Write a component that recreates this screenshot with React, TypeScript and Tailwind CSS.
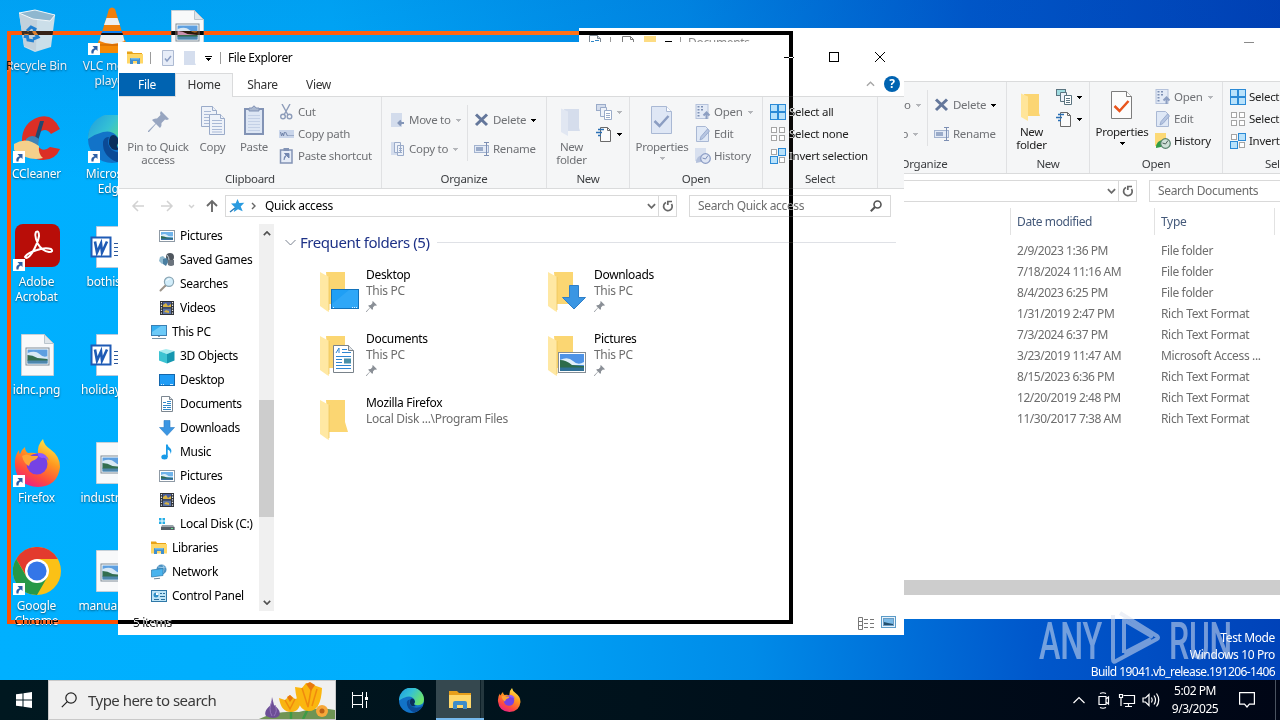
import type { ReactNode } from "react";

type IconProps = { className?: string };

/* ---------- small shared glyphs ---------- */

function Caret({ className = "text-black" }: IconProps) {
  return (
    <svg viewBox="0 0 5 3" className={`w-[5px] h-[3px] shrink-0 ${className}`} shapeRendering="crispEdges">
      <path d="M0 0h5v1H4v1H3v1H2V2H1V1H0z" fill="currentColor" />
    </svg>
  );
}

function PinIcon({ className = "" }: IconProps) {
  return (
    <svg viewBox="0 0 21 21" className={className} fill="currentColor">
      <path d="M13 0l8 8-2 1-2-.5-3.500 3.500q.5 3-1.500 5L8 13 1 21H0v-1L7.500 12.500 4 9q2-2 5-1.500L12.500 4 12 2z" />
    </svg>
  );
}

function ExplorerIcon({ className = "w-4 h-4" }: IconProps) {
  return (
    <svg viewBox="0 0 16 16" className={className}>
      <path d="M0 1.500h5l1 1.500h9v4H0z" fill="#e8a317" />
      <path d="M0 4h16v9.500H0z" fill="#ffd766" />
      <path d="M3 14V9q0-1 1-1h8q1 0 1 1v5h-3v-3H6v3z" fill="#3f8fcf" />
      <path d="M4 8h8v1.500H4z" fill="#74b8e8" />
    </svg>
  );
}

function PictureIcon({ className = "w-4 h-4" }: IconProps) {
  return (
    <svg viewBox="0 0 16 16" className={className}>
      <rect x=".5" y="2.500" width="15" height="11" fill="#fff" stroke="#8f9aa5" />
      <rect x="2" y="4" width="12" height="8" fill="#6fb3ea" />
      <path d="M2 7q4-2 6 0t6 1v1H2z" fill="#dcecf8" />
      <path d="M2 8q3 0 6 1.500l6 .5v1H2z" fill="#2d6b52" />
      <path d="M2 10.500h12V12H2z" fill="#3a72a8" />
    </svg>
  );
}

function GamesIcon() {
  return (
    <svg viewBox="0 0 16 16" className="w-4 h-4">
      <circle cx="11" cy="5" r="4" fill="#4f565e" />
      <path d="M8 8h7v5q-3 2-6 0z" fill="#6b747d" />
      <path d="M1 5l3-1 3 3-1 4-3 1-3-3z" fill="#8fb9cf" />
      <path d="M4 7l4-1 1 4-2 4-3-2z" fill="#4a7ea0" />
      <path d="M8 3q2 2 2 5" stroke="#c6d4de" fill="none" />
    </svg>
  );
}

function SearchesIcon() {
  return (
    <svg viewBox="0 0 16 16" className="w-4 h-4">
      <path d="M1.500 14.500l5-5" stroke="#9b9389" strokeWidth="2" strokeLinecap="round" />
      <circle cx="10" cy="5.800" r="4.600" fill="#d2edfa" stroke="#8aa6b5" strokeWidth="1.200" />
      <path d="M7.500 5q1-2 3-2" stroke="#fff" fill="none" />
    </svg>
  );
}

function VideosIcon() {
  return (
    <svg viewBox="0 0 16 16" className="w-4 h-4">
      <rect x="1" y="1" width="14" height="14" fill="#2e3238" />
      <path d="M2.500 2v13M13.500 2v13" stroke="#e4e6e8" strokeWidth="1.200" strokeDasharray="1.300 1.300" />
      <rect x="4" y="2" width="8" height="5.500" fill="#4b5f9c" />
      <rect x="4" y="8.500" width="8" height="5.500" fill="#5c75a8" />
      <path d="M4 5l3-2 2 3 3-2v3H4zM5 12l2-2 3 1v2z" fill="#d8b343" />
    </svg>
  );
}

function PcIcon() {
  return (
    <svg viewBox="0 0 16 16" className="w-4 h-4">
      <rect x=".5" y="1.500" width="15" height="10" fill="#35b0f2" stroke="#3a80b4" />
      <path d="M1 8l9-6h5v9H1z" fill="#6ccaf8" />
      <path d="M7 12h2v1H7z" fill="#8a98a4" />
      <path d="M1 14.500h14" stroke="#7493a8" />
    </svg>
  );
}

function CubeIcon() {
  return (
    <svg viewBox="0 0 16 16" className="w-4 h-4">
      <path d="M0 3l7-2 8.500 2L8 6z" fill="#a8ecf0" />
      <path d="M0 3l8 3v9.500l-8-3z" fill="#3cc3d2" />
      <path d="M8 6l7.500-3v9.500l-7.500 3z" fill="#1597b0" />
    </svg>
  );
}

function DesktopIcon() {
  return (
    <svg viewBox="0 0 16 16" className="w-4 h-4">
      <rect x=".5" y="2.500" width="15" height="11" fill="#1f9cf5" stroke="#1467ac" />
      <path d="M2 12.500h1M4 12.500h1M11 12.500h3" stroke="#cfe9fd" />
    </svg>
  );
}

function DocumentIcon() {
  return (
    <svg viewBox="0 0 16 16" className="w-4 h-4">
      <path d="M2.500.5h8l3 3v12h-11z" fill="#fff" stroke="#7c8791" />
      <path d="M10.500.5v3h3" fill="#d9dee3" stroke="#7c8791" />
      <path d="M4 6.500h3M8 5.500h4M8 7.500h4M4 9.500h8M4 11.500h3M4 13.500h8M8 11.500h4" stroke="#2f87c8" />
    </svg>
  );
}

function DownloadIcon({ className = "w-4 h-4" }: IconProps) {
  return (
    <svg viewBox="0 0 16 16" className={className}>
      <path d="M5 .5h6v7h4.500L8 15.500.5 7.500H5z" fill="#3b96e3" stroke="#2b7cc4" strokeWidth=".6" />
    </svg>
  );
}

function MusicIcon() {
  return (
    <svg viewBox="0 0 16 16" className="w-4 h-4">
      <ellipse cx="5.500" cy="13" rx="3.200" ry="2.500" fill="#1a9be8" />
      <path d="M7 13V.5h1.700q.2 2 2.300 3.500 2.500 2.500.5 6 .3-3.500-2.800-4.500V13z" fill="#1a9be8" />
    </svg>
  );
}

function DiskIcon() {
  return (
    <svg viewBox="0 0 16 16" className="w-4 h-4">
      <path d="M0 2h2.500v2.500H0zM3.500 2H6v2.500H3.500zM0 5.500h2.500V8H0zM3.500 5.500H6V8H3.500z" fill="#25aee6" />
      <path d="M3 9h11l1.500 2v3H2v-3z" fill="#9aa3aa" />
      <path d="M2 11h13.500v3H2z" fill="#565f67" />
      <path d="M12 12.500h2" stroke="#67e08c" />
    </svg>
  );
}

function NetworkIcon() {
  return (
    <svg viewBox="0 0 16 16" className="w-4 h-4">
      <circle cx="10.500" cy="5.500" r="5" fill="#4b91c2" />
      <path d="M7 3q4 1 8 0M12 1q2 4 0 8" stroke="#9dcbe8" fill="none" />
      <path d="M.5 6L12 4.500v7L.5 13z" fill="#49b4ee" stroke="#2c7aac" strokeWidth=".7" />
      <path d="M3 14.800l6-.5" stroke="#6f8798" />
    </svg>
  );
}

function ControlPanelIcon() {
  return (
    <svg viewBox="0 0 16 16" className="w-4 h-4">
      <rect x=".5" y="2.500" width="15" height="11" fill="#bfe5f7" stroke="#2f78a8" />
      <circle cx="5" cy="7" r="2.500" fill="#2f8fc6" />
      <path d="M5 7V4.500A2.500 2.500 0 017.500 7z" fill="#fff" />
      <path d="M9 5.500h2M12 5.500h2M9 8.500h5M3 11.500h5M10 11.500h4" stroke="#2a6f9c" />
    </svg>
  );
}

/* ---------- ribbon glyphs ---------- */

function PagesIcon() {
  return (
    <svg viewBox="0 0 32 32" className="w-8 h-8">
      <g fill="#eef2f9" stroke="#9aabc9">
        <path d="M4.500 1.500h11l4 4v16h-15z" />
        <path d="M15.500 1.500v4h4" />
        <path d="M12.500 9.500h11l4 4v16h-15z" />
        <path d="M23.500 9.500v4h4" />
      </g>
      <path
        d="M7 6.500h7M7 9.500h5M7 12.500h5M7 15.500h5M7 18.500h5M15 15.500h10M15 18.500h10M15 21.500h10M15 24.500h10M15 27h10"
        stroke="#a9b9d6"
      />
    </svg>
  );
}

function PasteIcon() {
  return (
    <svg viewBox="0 0 32 32" className="w-8 h-8">
      <rect x="7" y="4" width="18" height="25" fill="#dde6f4" stroke="#8293b5" strokeWidth="2" />
      <path d="M11 6V3h3q2-4 4 0h3v3z" fill="#aab8d0" stroke="#8293b5" />
      <path d="M10 10.500h12M10 13.500h12M10 16.500h12M10 19.500h12M10 22.500h12M10 25.500h12" stroke="#c3d0e6" />
    </svg>
  );
}

function ScissorsIcon() {
  return (
    <svg viewBox="0 0 16 16" className="w-4 h-4" fill="none" stroke="#8d9cb9" strokeWidth="1.400">
      <path d="M3 0l6 11M11 0L5 11" />
      <circle cx="4" cy="12.500" r="2.300" />
      <circle cx="10.500" cy="12.500" r="2.300" />
    </svg>
  );
}

function CopyPathIcon() {
  return (
    <svg viewBox="0 0 16 16" className="w-4 h-4">
      <rect x="0" y="4" width="15" height="8" fill="#c9d5ea" />
      <path d="M1.500 6l1 4 1-3 1 3 1-4M6.500 6l2 4M9.500 9.500h1M11.500 9.500h1M13.500 9.500h1" stroke="#6f82a8" fill="none" />
    </svg>
  );
}

function PasteShortcutIcon() {
  return (
    <svg viewBox="0 0 16 16" className="w-4 h-4">
      <rect x="1.500" y="2" width="11.500" height="13" fill="#e6ecf7" stroke="#8293b5" strokeWidth="1.500" />
      <path d="M4.500 0h5.500v3H4.500z" fill="#8293b5" />
      <path d="M5 12q-.5-4 3-5M5.500 5.500H10V10z" stroke="#7387b0" fill="#7387b0" />
    </svg>
  );
}

function MoveToIcon() {
  return (
    <svg viewBox="0 0 16 16" className="w-4 h-4">
      <path d="M1 1h11v14H1z" fill="#d3dcec" />
      <path d="M14 11H9M11 8.500L8.500 11l2.500 2.500" stroke="#8496b8" strokeWidth="2" fill="none" />
    </svg>
  );
}

function CopyToIcon() {
  return (
    <svg viewBox="0 0 16 16" className="w-4 h-4">
      <path d="M1 1h6v13H1z" fill="#d3dcec" />
      <path d="M4.500 1.500h6v10h-6zM7.500 4.500h6v10h-6z" fill="#eef2f9" stroke="#9aabc9" />
      <path d="M9 7.500h3M9 9.500h3M9 11.500h3" stroke="#9aabc9" />
    </svg>
  );
}

function DeleteIcon() {
  return (
    <svg viewBox="0 0 16 16" className="w-4 h-4" fill="none" stroke="#64779b" strokeWidth="3">
      <path d="M2 2.500l11 10.500M13 2.500L2 13" />
    </svg>
  );
}

function RenameIcon() {
  return (
    <svg viewBox="0 0 16 16" className="w-4 h-4">
      <rect x=".5" y="4.500" width="14" height="7" fill="#e3eaf6" stroke="#a3b3cf" />
      <rect x="2" y="6" width="7" height="4" fill="#9aabc9" />
      <path d="M10 1.500h5M12.500 1.500v13M10 14.500h5" stroke="#7d8fb3" />
    </svg>
  );
}

function NewFolderIcon({ active }: { active: boolean }) {
  return (
    <svg viewBox="0 0 32 32" className="w-8 h-8">
      <path d="M8 4h15v19l1 3H11z" fill={active ? "#fbd573" : "#d5ddec"} />
      <path d="M5 3.500l7 3V31l-7-4z" fill={active ? "#ffe59a" : "#e1e7f2"} />
    </svg>
  );
}

function NewItemIcon({ active }: { active: boolean }) {
  return (
    <svg viewBox="0 0 16 16" className="w-4 h-4" stroke={active ? "#5b7480" : "#9aabc9"}>
      <rect x=".5" y=".5" width="9" height="6" fill={active ? "#9fdbe0" : "#d3dcec"} />
      <path d="M4.500 3.500h6v9h-6z" fill="#eef2f9" />
      <path d="M8.500 6.500h7v9h-7z" fill="#fff" />
      <path d="M10 9.500h4M10 11.500h4M10 13.500h4" />
    </svg>
  );
}

function EasyAccessIcon() {
  return (
    <svg viewBox="0 0 16 16" className="w-4 h-4">
      <path d="M4.500 1.500h7l3 3v11h-10z" fill="#fbfbfb" stroke="#6a6a6a" />
      <path d="M11.500 1.500v3h3" fill="none" stroke="#6a6a6a" />
      <path d="M2 3.500h6M0 6.500h6M2 9.500h3" stroke="#2a6fb5" strokeWidth="1.300" />
    </svg>
  );
}

function PropertiesIcon({ active }: { active: boolean }) {
  return (
    <svg viewBox="0 0 32 32" className="w-8 h-8">
      <path
        d="M5.500 1.500h15l5 5v22h-20z"
        fill={active ? "#fcfcfc" : "#dfe7f5"}
        stroke={active ? "#7d7d7d" : "#a9b8d4"}
      />
      <path d="M20.500 1.500v5h5" fill="#fff" stroke={active ? "#7d7d7d" : "#a9b8d4"} />
      <path d="M8.500 16l5 5 9-10" fill="none" stroke={active ? "#e8541c" : "#8b9dc2"} strokeWidth="2.500" />
    </svg>
  );
}

function OpenIcon() {
  return (
    <svg viewBox="0 0 16 16" className="w-4 h-4">
      <rect x="1" y=".5" width="12" height="14" fill="#e3eaf6" stroke="#b5c2db" />
      <path d="M3.500 2v12M7 2v5" stroke="#7d8fb3" strokeWidth="2" strokeDasharray="1.500 1.500" />
      <path d="M11.500 15V9M8.500 11.500l3-3 3 3" stroke="#8d9fc2" strokeWidth="2" fill="none" />
    </svg>
  );
}

function EditIcon() {
  return (
    <svg viewBox="0 0 16 16" className="w-4 h-4">
      <path d="M1.500.5h9l3 3v12h-12z" fill="#dfe8f6" stroke="#a9b8d4" />
      <path d="M5 14l1-3.500L12.500 3l2 2-6.500 7.500z" fill="#b7c6e2" stroke="#8fa2c8" strokeWidth=".8" />
    </svg>
  );
}

function HistoryIcon({ active }: { active: boolean }) {
  return (
    <svg viewBox="0 0 16 16" className="w-4 h-4">
      <path d="M0 0h11v13H0z" fill={active ? "#fcd976" : "#d8e0ef"} />
      <path d="M1 15q0-8 8-8l-3 7z" fill={active ? "#2f9c46" : "#b4c1dc"} />
      <circle cx="10.500" cy="10.500" r="4.800" fill={active ? "#cfe0d8" : "#dfe6f4"} stroke={active ? "#57826c" : "#8b9cc4"} strokeWidth="1.200" />
      <path d="M7.500 10l3 1 2.500-3.500" fill="none" stroke={active ? "#4a5f57" : "#7b8db8"} />
    </svg>
  );
}

function SelectIcon({ filled }: { filled: boolean[] }) {
  return (
    <svg viewBox="0 0 16 16" className="w-4 h-4">
      {filled.map((on, i) => {
        const x = (i % 2) * 8;
        const y = i > 1 ? 8 : 0;
        return on ? (
          <rect key={i} x={x + 0.5} y={y + 0.5} width="7" height="7" fill="#b9e2fb" stroke="#2b8ad6" />
        ) : (
          <rect key={i} x={x + 1.5} y={y + 1.5} width="5" height="5" fill="#fff" stroke="#a5a5a5" />
        );
      })}
    </svg>
  );
}

/* ---------- ribbon ---------- */

function SmallButton({
  icon,
  children,
  enabled = false,
  caret,
}: {
  icon: ReactNode;
  children?: ReactNode;
  enabled?: boolean;
  caret?: "on" | "off";
}) {
  return (
    <div className={`flex items-center h-[22px] gap-[3px] whitespace-nowrap ${enabled ? "text-[#222]" : "text-[#6f7175]"}`}>
      {icon}
      {children && <span>{children}</span>}
      {caret && <Caret className={caret === "on" ? "text-black ml-0.5" : "text-[#b4b6ba] ml-0.5"} />}
    </div>
  );
}

function LargeButton({
  icon,
  lines,
  width,
  enabled = false,
}: {
  icon: ReactNode;
  lines: string[];
  width: string;
  enabled?: boolean;
}) {
  return (
    <div className={`flex flex-col items-center pt-1 shrink-0 ${width} ${enabled ? "text-[#222]" : "text-[#6f7175]"}`}>
      <div className="flex items-center justify-center w-8 h-8">{icon}</div>
      <div className="mt-[3px] text-center leading-[13px] whitespace-nowrap">
        {lines.map((l) => (
          <div key={l}>{l}</div>
        ))}
      </div>
    </div>
  );
}

function Group({ label, width, children }: { label: string; width: string; children: ReactNode }) {
  return (
    <div className={`flex flex-col shrink-0 border-r border-[#e0e1e3] pt-1 ${width}`}>
      <div className="flex h-[66px]">{children}</div>
      <div className="h-5 text-center leading-[24px] text-[#3c3e41]">{label}</div>
    </div>
  );
}

function Ribbon({ active = false }: { active?: boolean }) {
  return (
    <div className="flex h-[93px] shrink-0 bg-[#f5f6f7] border-t border-b border-[#dadbdc] overflow-hidden text-[11.5px] tracking-[-0.28px]">
      <Group label="Clipboard" width="w-[263px]">
        <LargeButton icon={<PinIcon className="w-[21px] h-[21px] text-[#97a5c0]" />} lines={["Pin to Quick", "access"]} width="w-[78px]" />
        <LargeButton icon={<PagesIcon />} lines={["Copy"]} width="w-[31px]" />
        <LargeButton icon={<PasteIcon />} lines={["Paste"]} width="w-[52px]" />
        <div className="flex flex-col -ml-px">
          <SmallButton icon={<ScissorsIcon />}>Cut</SmallButton>
          <SmallButton icon={<CopyPathIcon />}>Copy path</SmallButton>
          <SmallButton icon={<PasteShortcutIcon />}>Paste shortcut</SmallButton>
        </div>
      </Group>
      <Group label="Organize" width="w-[165px]">
        <div className="flex flex-col gap-[7px] w-[86px] h-14 mt-1 pl-2 pt-1 border-r border-[#e0e1e3]">
          <SmallButton icon={<MoveToIcon />} caret="off">Move to</SmallButton>
          <SmallButton icon={<CopyToIcon />} caret="off">Copy to</SmallButton>
        </div>
        <div className="flex flex-col gap-[7px] pl-[6px] pt-2">
          <SmallButton icon={<DeleteIcon />} caret="on">Delete</SmallButton>
          <SmallButton icon={<RenameIcon />}>Rename</SmallButton>
        </div>
      </Group>
      <Group label="New" width="w-[83px]">
        <LargeButton icon={<NewFolderIcon active={active} />} lines={["New", "folder"]} width="w-[49px]" enabled={active} />
        <div className="flex flex-col">
          <SmallButton icon={<NewItemIcon active={active} />} caret={active ? "on" : "off"} />
          <SmallButton icon={<EasyAccessIcon />} caret="on" />
        </div>
      </Group>
      <Group label="Open" width="w-[133px]">
        <div className="flex flex-col items-center">
          <LargeButton icon={<PropertiesIcon active={active} />} lines={["Properties"]} width="w-[64px]" enabled={active} />
          <Caret className={active ? "mt-1 text-black" : "mt-1 text-[#b4b6ba]"} />
        </div>
        <div className="flex flex-col pl-px">
          <SmallButton icon={<OpenIcon />} caret="off">Open</SmallButton>
          <SmallButton icon={<EditIcon />}>Edit</SmallButton>
          <SmallButton icon={<HistoryIcon active={active} />} enabled={active}>History</SmallButton>
        </div>
      </Group>
      <Group label="Select" width="w-[115px]">
        <div className="flex flex-col pl-[7px]">
          <SmallButton icon={<SelectIcon filled={[true, true, true, true]} />} enabled>Select all</SmallButton>
          <SmallButton icon={<SelectIcon filled={[false, false, false, false]} />} enabled>Select none</SmallButton>
          <SmallButton icon={<SelectIcon filled={[false, true, true, false]} />} enabled>Invert selection</SmallButton>
        </div>
      </Group>
    </div>
  );
}

function AddressBar({ search, children }: { search: string; children?: ReactNode }) {
  return (
    <div className="flex items-center shrink-0 h-[22px] mt-1.5">
      <div className="flex items-center w-[106px] shrink-0 pl-3">
        <svg viewBox="0 0 94 16" className="w-[94px] h-4" fill="none" strokeWidth="1.500">
          <path d="M13 8H2M7 3L2 8l5 5M30 8h11M36 3l5 5-5 5" stroke="#d2d2d2" />
          <path d="M58 7l2.500 2.500L63 7" stroke="#d2d2d2" />
          <path d="M81 14V3M76 8l5-5 5 5" stroke="#6a6a6a" strokeWidth="1.900" />
        </svg>
      </div>
      <div className="flex items-center h-[22px] w-[452px] shrink-0 border border-[#d9d9d9]">
        {children}
        <div className="flex-1" />
        <svg viewBox="0 0 10 6" className="w-[9px] h-[6px] mr-[2px]" fill="none" stroke="#6a6a6a" strokeWidth="2">
          <path d="M1 1l4 4 4-4" />
        </svg>
        <div className="flex items-center justify-center w-[18px] h-full border-l border-[#d9d9d9]">
          <svg viewBox="0 0 12 12" className="w-3 h-3" fill="none" stroke="#666" strokeWidth="1.700">
            <path d="M4 2.500a4.300 4.300 0 105.500 1.500" />
            <path d="M5.800 5V1.500H10" />
          </svg>
        </div>
      </div>
      <div className="flex items-center justify-between h-[22px] w-[202px] shrink-0 ml-3 pl-2 pr-2 border border-[#d9d9d9] text-[#6d6d6d] tracking-[-0.35px]">
        <span>{search}</span>
        <svg viewBox="0 0 12 12" className="w-3 h-3" fill="none" stroke="#555">
          <circle cx="7.500" cy="4.500" r="3.500" strokeWidth="1.600" />
          <path d="M5 7L.8 11.200" strokeWidth="2" />
        </svg>
      </div>
    </div>
  );
}

/* ---------- quick access window ---------- */

const navItems: { name: string; icon: ReactNode; top?: boolean }[] = [
  { name: "Pictures", icon: <PictureIcon /> },
  { name: "Saved Games", icon: <GamesIcon /> },
  { name: "Searches", icon: <SearchesIcon /> },
  { name: "Videos", icon: <VideosIcon /> },
  { name: "This PC", icon: <PcIcon />, top: true },
  { name: "3D Objects", icon: <CubeIcon /> },
  { name: "Desktop", icon: <DesktopIcon /> },
  { name: "Documents", icon: <DocumentIcon /> },
  { name: "Downloads", icon: <DownloadIcon /> },
  { name: "Music", icon: <MusicIcon /> },
  { name: "Pictures", icon: <PictureIcon /> },
  { name: "Videos", icon: <VideosIcon /> },
  { name: "Local Disk (C:)", icon: <DiskIcon /> },
  { name: "Libraries", icon: <ExplorerIcon />, top: true },
  { name: "Network", icon: <NetworkIcon />, top: true },
  { name: "Control Panel", icon: <ControlPanelIcon />, top: true },
];

function FolderIcon({ kind }: { kind: string }) {
  return (
    <svg viewBox="0 0 42 44" className="w-[42px] h-11 shrink-0">
      <path d="M6 1h19v22l3 10H9z" fill="#fbd672" />
      <path d="M0 1l9 5v35l-2-1-7-5z" fill="#ffe8a3" />
      <path d="M9 6v33" stroke="#efc65c" strokeWidth=".8" />
      {kind === "desktop" && (
        <g>
          <rect x="11.500" y="18.500" width="27" height="19" fill="#1f9ff5" stroke="#1272bb" />
          <path d="M12 33L29 19h9v18H12z" fill="#3fb0fa" opacity=".5" />
          <path d="M13 36.500h2M32 36.500h5" stroke="#e1f2ff" strokeDasharray="1 1" />
        </g>
      )}
      {kind === "downloads" && (
        <path d="M21.500 14.500h9v12h7L26 38 14.500 26.500h7z" fill="#3b96e3" stroke="#2f7fc8" />
      )}
      {kind === "documents" && (
        <g>
          <path d="M13.500 10.500h15l5 5v22h-20z" fill="#fff" stroke="#79828a" />
          <path d="M28.500 10.500v5h5" fill="#e3e6e9" stroke="#79828a" />
          <path d="M16 18l3-5v5M22 14.500h5M22 17.500h9M16 21.500h15M16 30.500h15M16 33.500h15M16 27.500h6M16 24.500h6" stroke="#2e86d2" fill="none" />
          <rect x="24" y="23.500" width="7" height="5" fill="#4a90a8" />
        </g>
      )}
      {kind === "pictures" && (
        <g>
          <rect x="10.500" y="17.500" width="27" height="20" fill="#fff" stroke="#848d95" />
          <rect x="12" y="19" width="24" height="17" fill="#4f93e6" />
          <path d="M12 25q8-4 13 1t11 1v3H12z" fill="#e1effa" />
          <path d="M12 25q6 0 12 5l12 1v2H12z" fill="#2d6b4a" />
          <path d="M12 32.500h24V36H12z" fill="#2f7096" />
        </g>
      )}
    </svg>
  );
}

const folders = [
  { name: "Desktop", path: "This PC", kind: "desktop", pinned: true },
  { name: "Downloads", path: "This PC", kind: "downloads", pinned: true },
  { name: "Documents", path: "This PC", kind: "documents", pinned: true },
  { name: "Pictures", path: "This PC", kind: "pictures", pinned: true },
  { name: "Mozilla Firefox", path: "Local Disk ...\\Program Files", kind: "plain", pinned: false },
];

function QuickAccessWindow() {
  return (
    <div className="absolute left-[118px] top-[42px] w-[786px] h-[593px] bg-white flex flex-col overflow-hidden text-black">
      <div className="flex items-center h-[31px] shrink-0 pl-[9px]">
        <ExplorerIcon />
        <div className="w-px h-3 ml-[7px] bg-[#9b9b9b]" />
        <svg viewBox="0 0 12 16" className="w-3 h-4 ml-[11px]">
          <path d="M.5.5h11v15H.5z" fill="#e7edf8" stroke="#adbad2" />
          <path d="M3 8.500l2 2.500 4-5" fill="none" stroke="#8b9dc2" strokeWidth="1.500" />
        </svg>
        <svg viewBox="0 0 12 16" className="w-3 h-4 ml-2.5">
          <path d="M0 1h11v12l1 2H0z" fill="#d5deee" />
        </svg>
        <svg viewBox="0 0 7 6" className="w-[7px] h-1.5 ml-[9px] mt-0.5" shapeRendering="crispEdges">
          <path d="M0 0h7v1H0zM1 2h5v1H5v1H4v1H3V4H2V3H1z" />
        </svg>
        <div className="w-px h-3 ml-[8px] bg-[#9b9b9b]" />
        <span className="ml-[7px] tracking-[-0.4px]">File Explorer</span>
        <div className="flex-1" />
        <svg viewBox="0 0 138 31" className="w-[138px] h-[31px]" fill="none" stroke="#000" shapeRendering="crispEdges">
          <path d="M18 15.500h10" />
          <rect x="63.500" y="10.500" width="9" height="9" />
          <path d="M109 10l10 10M119 10l-10 10" shapeRendering="auto" />
        </svg>
      </div>
      <div className="flex h-[23px] shrink-0 pl-px text-[#333]">
        <div className="w-14 bg-[#0063b1] text-white text-center leading-[24px]">File</div>
        <div className="w-[58px] h-6 bg-[#f5f6f7] border border-b-0 border-[#dadbdc] text-center leading-[22px] relative">Home</div>
        <div className="w-[59px] text-center leading-[24px]">Share</div>
        <div className="w-[53px] text-center leading-[24px]">View</div>
        <div className="flex-1" />
        <svg viewBox="0 0 10 6" className="w-[9px] h-1.5 mt-[8px]" fill="none" stroke="#a6a6a6" strokeWidth="1.500">
          <path d="M1 5l4-4 4 4" />
        </svg>
        <div className="w-4 h-4 mt-[3px] ml-[9px] mr-[4px] rounded-full bg-[#0063b1] text-white font-bold text-center leading-4 tracking-normal">?</div>
      </div>
      <div className="flex flex-col shrink-0 pl-px">
        <Ribbon />
      </div>
      <div className="pl-px shrink-0">
        <AddressBar search="Search Quick access">
          <svg viewBox="0 0 16 16" className="w-4 h-4 ml-[3px]">
            <path d="M8.500 1l1.800 4 5-.3-3.600 3.800 2 4.800-4.700-2L4.800 14l1-4.800L2 5.500l4.700-.3z" fill="#2a9be0" />
            <path d="M6 10l-5 4" stroke="#2a7ab5" strokeWidth="1.500" />
          </svg>
          <svg viewBox="0 0 5 8" className="w-[5px] h-2 ml-[6px] mr-[9px]" fill="none" stroke="#666" strokeWidth="1.400">
            <path d="M1 1l3 3-3 3" />
          </svg>
          <span>Quick access</span>
        </AddressBar>
      </div>
      <div className="flex h-[387px] shrink-0 mt-[7px]">
        <div className="w-[141px] shrink-0">
          {navItems.map((item, i) => (
            <div key={i} className={`flex items-center h-6 whitespace-nowrap ${item.top ? "pl-[33px]" : "pl-[41px]"}`}>
              {item.icon}
              <span className="ml-[5px]">{item.name}</span>
            </div>
          ))}
        </div>
        <div className="flex flex-col items-center w-[15px] shrink-0 bg-[#f0f0f0]">
          <svg viewBox="0 0 10 6" className="w-2 h-[5px] mt-[7px]" fill="none" stroke="#505050" strokeWidth="2">
            <path d="M1 5l4-4 4 4" />
          </svg>
          <div className="w-full h-[117px] mt-[164px] bg-[#cdcdcd]" />
          <div className="flex-1" />
          <svg viewBox="0 0 10 6" className="w-2 h-[5px] mb-[6px]" fill="none" stroke="#505050" strokeWidth="2">
            <path d="M1 1l4 4 4-4" />
          </svg>
        </div>
        <div className="flex-1 pl-[11px] pr-2 pt-2">
          <div className="flex items-center h-5">
            <svg viewBox="0 0 11 7" className="w-[11px] h-[7px]" fill="none" stroke="#7a8290">
              <path d="M.5 1l5 5 5-5" />
            </svg>
            <span className="ml-1 text-[15px] text-[#1e3287] tracking-[-0.44px] whitespace-nowrap">Frequent folders (5)</span>
            <div className="flex-1 h-px mt-px ml-[7px] bg-[#dfe1e6]" />
          </div>
          <div className="grid grid-cols-[228px_228px] auto-rows-[64px] pl-[35px] pt-[15px]">
            {folders.map((f) => (
              <div key={f.name} className="flex">
                <div className="pt-[4px]">
                  <FolderIcon kind={f.kind} />
                </div>
                <div className="ml-1 leading-4 whitespace-nowrap">
                  <div>{f.name}</div>
                  <div className="text-[#6d6d6d]">{f.path}</div>
                  {f.pinned && <PinIcon className="w-[11px] h-[11px] mt-0.5 text-[#8a8f96]" />}
                </div>
              </div>
            ))}
          </div>
        </div>
      </div>
      <div className="flex items-center flex-1 pl-[15px] pr-2 text-[#222]">
        <span>5 items</span>
        <div className="flex-1" />
        <svg viewBox="0 0 17 13" className="w-[17px] h-[13px]" fill="none" stroke="#777">
          <path d="M.5.5h4v12h-4zM.5 4.500h4M.5 8.500h4" />
          <path d="M6 2.500h5M12 2.500h5M6 6.500h5M12 6.500h5M6 10.500h5M12 10.500h5" strokeDasharray="4 1" />
        </svg>
        <svg viewBox="0 0 15 12" className="w-[15px] h-3 ml-1.5 mb-0.5">
          <rect x=".5" y=".5" width="14" height="11" fill="#e8f3fb" stroke="#5b9bc8" />
          <rect x="2.500" y="2.500" width="10" height="7" fill="#79b9e6" stroke="#6a9cc4" />
          <path d="M3 6l4 1 5 1v1H3z" fill="#25506e" />
        </svg>
      </div>
    </div>
  );
}

/* ---------- documents window, behind ---------- */

const files = [
  ["2/9/2023 1:36 PM", "File folder"],
  ["7/18/2024 11:16 AM", "File folder"],
  ["8/4/2023 6:25 PM", "File folder"],
  ["1/31/2019 2:47 PM", "Rich Text Format"],
  ["7/3/2024 6:37 PM", "Rich Text Format"],
  ["3/23/2019 11:47 AM", "Microsoft Access ..."],
  ["8/15/2023 6:36 PM", "Rich Text Format"],
  ["12/20/2019 2:48 PM", "Rich Text Format"],
  ["11/30/2017 7:38 AM", "Rich Text Format"],
];

function DocumentsWindow() {
  return (
    <div className="absolute left-[579px] top-[28px] w-[701px] h-[591px] bg-white flex flex-col overflow-hidden text-black">
      <div className="flex items-center h-[30px] shrink-0 pl-2">
        <DocumentIcon />
        <div className="w-px h-3 ml-[7px] bg-[#9b9b9b]" />
        <svg viewBox="0 0 12 16" className="w-3 h-4 ml-[11px]">
          <path d="M.5 1.500h8l3 3v11H.5zM8.500 1.500v3h3" fill="#fff" stroke="#7d7d7d" />
        </svg>
        <svg viewBox="0 0 12 16" className="w-3 h-4 ml-2.5">
          <path d="M0 1h12v14H0z" fill="#fddc83" />
        </svg>
        <svg viewBox="0 0 7 6" className="w-[7px] h-1.5 ml-[9px] mt-0.5" shapeRendering="crispEdges">
          <path d="M0 0h7v1H0zM1 2h5v1H5v1H4v1H3V4H2V3H1z" />
        </svg>
        <div className="w-px h-3 ml-[8px] bg-[#9b9b9b]" />
        <span className="ml-[7px] text-[#8a8a8a]">Documents</span>
        <div className="flex-1" />
        <div className="w-2.5 h-px mr-[26px] mb-0.5 bg-[#8a8a8a]" />
      </div>
      <div className="h-[23px] shrink-0" />
      <Ribbon active />
      <AddressBar search="Search Documents" />
      <div className="flex h-[27px] shrink-0 mt-[6px] text-[#44597a] leading-[28px]">
        <div className="w-[432px] shrink-0 border-r border-[#e2e2e2]" />
        <div className="w-36 shrink-0 pl-1.5 border-r border-[#e2e2e2] tracking-[-0.38px]">Date modified</div>
        <div className="w-[120px] shrink-0 pl-1.5 border-r border-[#e2e2e2]">Type</div>
      </div>
      <div className="flex flex-col flex-1 pt-[5px] text-[#6d6d6d]">
        {files.map(([date, type]) => (
          <div key={date} className="flex h-[21px] leading-[21px] whitespace-nowrap">
            <div className="w-[438px] shrink-0" />
            <div className="w-36 shrink-0 tracking-[-0.46px]">{date}</div>
            <div className="shrink-0 tracking-[-0.34px]">{type}</div>
          </div>
        ))}
      </div>
      <div className="h-[15px] shrink-0 bg-[#cdcdcd]" />
      <div className="h-6 shrink-0" />
    </div>
  );
}

/* ---------- desktop ---------- */

function ShortcutBadge() {
  return (
    <svg viewBox="0 0 12 12" className="absolute left-0 bottom-0 w-3 h-3">
      <path d="M0 0h12v12H0z" fill="#fff" />
      <path d="M3.500 10.500Q2.500 6 6.500 5.200L4.500 3h5v5L8 6.500Q5.500 7 5.500 10.500z" fill="#2d5fa6" />
    </svg>
  );
}

function RecycleBin() {
  return (
    <svg viewBox="0 0 48 48" className="w-12 h-12">
      <path d="M6 6l36 3-4 31-16 5-11-5z" fill="#d6e1e8" opacity=".95" />
      <path d="M6 6l18 6-1 32-12-5z" fill="#c1d1dc" />
      <path d="M6 6L22 3l20 5-5 6-17-2z" fill="#8fb7cf" stroke="#f2f7fa" />
      <path d="M14 24l4-4 4 2-1 3 4 5-5 2M14 27l1 6 6 1M13 27l-1 4" fill="none" stroke="#1f7fd0" strokeWidth="3" />
    </svg>
  );
}

function VlcIcon() {
  return (
    <svg viewBox="0 0 48 48" className="w-12 h-12">
      <path d="M11 33h26l4 11q0 2-3 2H10q-3 0-3-2z" fill="#f58a07" />
      <path d="M21 2q3-3 6 0l10 33q-13 8-26 0z" fill="#f07f0a" />
      <path d="M18.500 11h11l2.500 7H16zM13.500 26h21l2 8q-12 6-25 0z" fill="#eceff1" />
      <path d="M11 38h26" stroke="#c76200" />
    </svg>
  );
}

function CCleanerIcon() {
  return (
    <svg viewBox="0 0 48 48" className="w-12 h-12">
      <path d="M47 14L38 19Q33 12 27 17t-2 14q5 7 12 1l10 2Q42 46 28 45 11 43 9 28 8 8 26 2q14-4 21 12z" fill="#dc2f26" />
      <path d="M27 6h4l-6 20h-4z" fill="#23486f" />
      <path d="M13 24q6-6 13 0l-1 7-12-1z" fill="#3f84b8" />
      <path d="M1 29q12-8 25 2-1 8 4 12-14 4-29-8z" fill="#f5d08b" />
    </svg>
  );
}

function EdgeIcon({ className = "w-12 h-12" }: IconProps) {
  return (
    <svg viewBox="0 0 48 48" className={className}>
      <defs>
        <linearGradient id="edgeTop" x1="0" y1="0" x2="1" y2=".5">
          <stop offset="0" stopColor="#1d9be0" />
          <stop offset=".5" stopColor="#35c1d4" />
          <stop offset="1" stopColor="#6be36c" />
        </linearGradient>
      </defs>
      <circle cx="24" cy="24" r="24" fill="#1273c8" />
      <path d="M0 24A24 24 0 0148 22q0 11-12 11-9 0-6-5 2-4-2-8-5-5-13-3T0 24z" fill="url(#edgeTop)" />
      <path d="M15 27q-1 14 14 20 12-3 17-13-13 7-22 1-6-5-3-13-5 0-6 5z" fill="#0b4a96" />
      <path d="M24 34q-5-5-2-12 3-4 7 0 3 4 0 8-1 3 3 4-4 2-8 0z" fill="#0a2f5c" />
    </svg>
  );
}

function AcrobatIcon() {
  return (
    <svg viewBox="0 0 48 48" className="w-12 h-12">
      <rect x="2" y="1" width="45" height="43" rx="8" fill="#b80d08" />
      <path
        d="M12 34q2-4 12-7 8-3 14-1 3 3-2 3-7-1-11-8-4-8-2-12 3-2 3 4-1 7-7 17-5 7-7 4z"
        fill="none"
        stroke="#fff"
        strokeWidth="2"
      />
    </svg>
  );
}

function ImageFileIcon() {
  return (
    <svg viewBox="0 0 48 48" className="w-12 h-12">
      <path d="M8.500 3.500h23l9 9v32h-32z" fill="#f8f9fa" stroke="#c5d0d8" />
      <path d="M31.500 3.500v9h9z" fill="#dfe5ea" stroke="#b9c4cc" />
      <rect x="13" y="17" width="23" height="17" fill="#fff" stroke="#7f8c96" />
      <rect x="14.500" y="18.500" width="20" height="14" fill="#5d9fe0" />
      <path d="M14.500 22q8-3 12 1t8 2v3h-20z" fill="#d8e8f5" />
      <path d="M14.500 24q5 0 10 3l10 1v2h-20z" fill="#336e50" />
      <path d="M14.500 29.500h20v3h-20z" fill="#4d86ab" />
    </svg>
  );
}

function WordFileIcon() {
  return (
    <svg viewBox="0 0 48 48" className="w-12 h-12">
      <path d="M8.500 3.500h23l9 9v32h-32z" fill="#fff" stroke="#b9c9dc" />
      <path d="M26 20.500h11M26 24.500h11M26 28.500h11M26 32.500h11" stroke="#2b579a" />
      <rect x="3.500" y="14.500" width="19" height="19" fill="#fff" stroke="#1f5bb5" strokeWidth="2" />
      <path d="M7 18.500l2 11 4-9 1 9 5-11" fill="none" stroke="#1f5bb5" strokeWidth="2.600" />
    </svg>
  );
}

function FirefoxIcon({ className = "w-12 h-12" }: IconProps) {
  return (
    <svg viewBox="0 0 48 48" className={className}>
      <defs>
        <linearGradient id="foxBody" x1=".8" y1="0" x2=".3" y2="1">
          <stop offset="0" stopColor="#fff14f" />
          <stop offset=".4" stopColor="#ff9a1f" />
          <stop offset=".75" stopColor="#ff4a3f" />
          <stop offset="1" stopColor="#e8208a" />
        </linearGradient>
      </defs>
      <path d="M30 0q1 6 7 10 10 7 10 18-2 19-22 20Q4 47 2 27 1 17 6 11q0 3 1 4 2-5 5-7 0 4 3 6 6-1 10 1-1-9 5-15z" fill="url(#foxBody)" />
      <circle cx="24" cy="25" r="10.500" fill="#7542e5" />
      <path d="M9 17q5-3 9 0h7q0 3-6 5-2 1-3 5-5-2-7-10z" fill="#ffa436" />
      <path d="M25 14q8-1 11 8-3-4-7-3-5-1-4-5z" fill="#9059ff" />
    </svg>
  );
}

function ChromeIcon() {
  return (
    <svg viewBox="0 0 48 48" className="w-12 h-12">
      <circle cx="24" cy="24" r="24" fill="#fbc116" />
      <path d="M3.200 12A24 24 0 0144.800 12H24L14 30z" fill="#e33b2e" />
      <path d="M3.200 12A24 24 0 0024 48l10.400-18L24 36 13.600 30z" fill="#279847" />
      <circle cx="24" cy="24" r="12" fill="#fff" />
      <circle cx="24" cy="24" r="9.600" fill="#3476e8" />
    </svg>
  );
}

const desktopColumns: { label: string[]; icon: ReactNode; shortcut?: boolean }[][] = [
  [
    { label: ["Recycle Bin"], icon: <RecycleBin /> },
    { label: ["CCleaner"], icon: <CCleanerIcon />, shortcut: true },
    { label: ["Adobe", "Acrobat"], icon: <AcrobatIcon />, shortcut: true },
    { label: ["idnc.png"], icon: <ImageFileIcon /> },
    { label: ["Firefox"], icon: <FirefoxIcon />, shortcut: true },
    { label: ["Google", "Chrome"], icon: <ChromeIcon />, shortcut: true },
  ],
  [
    { label: ["VLC media", "player"], icon: <VlcIcon />, shortcut: true },
    { label: ["Microsoft", "Edge"], icon: <EdgeIcon />, shortcut: true },
    { label: ["bothis.rtf"], icon: <WordFileIcon /> },
    { label: ["holidays.rtf"], icon: <WordFileIcon /> },
    { label: ["industri.jpg"], icon: <ImageFileIcon /> },
    { label: ["manual.png"], icon: <ImageFileIcon /> },
  ],
  [{ label: [], icon: <ImageFileIcon /> }],
];

function DesktopIcons() {
  return (
    <div className="flex pt-[7px] -ml-px text-white [text-shadow:0_1px_2px_rgba(0,0,0,0.55)]">
      {desktopColumns.map((col, c) => (
        <div key={c} className="flex flex-col w-[75px]">
          {col.map((item, i) => (
            <div key={i} className="flex flex-col items-center h-[108px]">
              <div className="relative w-12 h-12">
                {item.icon}
                {item.shortcut && <ShortcutBadge />}
              </div>
              <div className="mt-[3px] text-center leading-[15px] whitespace-nowrap tracking-[-0.2px]">
                {item.label.map((l) => (
                  <div key={l}>{l}</div>
                ))}
              </div>
            </div>
          ))}
        </div>
      ))}
    </div>
  );
}

function Watermark() {
  return (
    <svg viewBox="0 0 194 64" className="absolute left-[1038px] top-[607px] w-[194px] h-16" opacity=".52">
      <g fill="#dfe6f2" fontFamily="Roboto, sans-serif" fontSize="51" fontWeight="500">
        <text x="1" y="52" textLength="63" lengthAdjust="spacingAndGlyphs">ANY</text>
        <text x="131" y="52" textLength="63" lengthAdjust="spacingAndGlyphs">RUN</text>
      </g>
      <g fill="none" stroke="#dde4f0" strokeWidth="4" strokeLinejoin="round">
        <path d="M86 46V13l29 17M86 46l27-14" />
        <path d="M75 8v44q0 4 3 2l41-22q2-1 0-3L82 6" />
      </g>
    </svg>
  );
}

function Taskbar() {
  return (
    <div className="absolute left-0 bottom-0 flex items-center w-full h-10 bg-gradient-to-r from-[#001820] via-[#00121c] to-[#000616] text-white">
      <div className="flex items-center justify-center w-12 h-10">
        <svg viewBox="0 0 16 16" className="w-4 h-4" fill="#fff">
          <path d="M0 2.300l6.500-.9v6.100H0zM7.500 1.200L16 0v7.500H7.500zM0 8.500h6.500v6.100L0 13.700zM7.500 8.500H16V16l-8.500-1.200z" />
        </svg>
      </div>
      <div className="flex items-center w-[288px] h-10 pl-3 bg-[#f0f0f0] border border-[#c9c9c9] text-[#3a3a3a]">
        <svg viewBox="0 0 16 16" className="w-4 h-4" fill="none" stroke="#222" strokeWidth="1.200">
          <circle cx="10" cy="6" r="5.200" />
          <path d="M6.300 9.700L.8 15.200" />
        </svg>
        <span className="ml-[11px] text-[15px] tracking-[-0.52px] whitespace-nowrap">Type here to search</span>
        <div className="flex-1" />
        <svg viewBox="0 0 80 38" className="w-20 h-[38px]">
          <path d="M4 38q18-9 40-7 20-6 36-2v9z" fill="#6f9454" />
          <path d="M17 16l2 8q8 6 5 11-5 4-13 0-3-5 5-11z" fill="#6c4e96" />
          <path d="M17 20q-4 8 0 15M20 24q3 6-1 11" stroke="#9274ba" fill="none" />
          <path d="M36 27v11M54 26l-6 12M54 26q4 2 8-2" stroke="#3e9b45" strokeWidth="2.500" fill="none" />
          <path d="M24 17l6 2 5-5 5 4 6-2q0 15-10 15t-12-14z" fill="#f8b413" />
          <path d="M40 6l7 1 4-5 6 1 4 2 6 2q-1 23-13 23T40 6z" fill="#fbb60f" />
          <path d="M47 7l6 19 3-17M62 8l-5 17M30 19l5 9 5-10" stroke="#f08a0d" strokeWidth="1.500" fill="none" />
          <path d="M51 3l4-2 5 3-4 6z" fill="#e8780d" />
          <path d="M32 16l3-2 3 3-3 4z" fill="#e8780d" />
          <circle cx="67" cy="30" r="6" fill="#f7a83a" />
          <circle cx="67" cy="30" r="2.500" fill="#bd6115" />
        </svg>
      </div>
      <div className="flex items-center justify-center w-12 h-10">
        <svg viewBox="0 0 18 18" className="w-[18px] h-[18px]" fill="none" stroke="#fff">
          <path d="M1.500 1v3.500h10V1M1.500 17v-3.500h10V17M1.500 4.500v9M11.500 4.500v9M15.500 1v5M15.500 10v7" />
          <path d="M14 6h3v3h-3z" fill="#fff" stroke="none" />
        </svg>
      </div>
      <div className="flex items-center justify-center w-[52px] h-10 pl-0.5">
        <EdgeIcon className="w-[25px] h-[25px]" />
      </div>
      <div className="flex h-10 border-b-2 border-[#76b9ed]">
        <div className="flex items-center justify-center w-11 h-[38px] pl-1 pt-0.5 bg-[#35484f]">
          <svg viewBox="0 0 22 20" className="w-[22px] h-5">
            <path d="M0 1h8l2 2h12v3H0z" fill="#e79f1b" />
            <path d="M0 5h22v13H0z" fill="#ffd76a" />
            <path d="M4 19v-6q0-2 2-2h10q2 0 2 2v6h-4v-4H8v4z" fill="#3d8cc9" />
          </svg>
        </div>
        <div className="w-1 h-[38px] bg-[#24373e] border-l border-[#0d2028]" />
      </div>
      <div className="flex items-center justify-center w-[50px] h-10">
        <FirefoxIcon className="w-6 h-6" />
      </div>
      <div className="flex-1" />
      <svg viewBox="0 0 92 18" className="w-[92px] h-[18px] mr-[5px]" fill="none" stroke="#fff" strokeWidth="1.200">
        <path d="M1.500 12l5.500-5.500 5.500 5.500" />
        <path d="M27 5.500h7v8h-7zM34 8l2.500-2v7L34 11M28 2.500q3-1.500 6 0M28 16.500q3 1.500 6 0" />
        <path d="M51.500 4.500h11v8h-11M53 15.500h7M56.500 13v2M47.500 3.500h3v3h-3zM49 7v8" />
        <path d="M71 7h2.500l3.500-3.500v11L73.500 11H71zM79.500 6.500q1.500 2.500 0 5M82 4.500q3 4.500 0 9M84.500 2.500q4.500 6.500 0 13" />
      </svg>
      <div className="w-[52px] text-center leading-[18px] tracking-[-0.45px] whitespace-nowrap">
        <div>5:02 PM</div>
        <div>9/3/2025</div>
      </div>
      <svg viewBox="0 0 16 16" className="w-4 h-4 ml-[18px] mr-5" fill="none" stroke="#fff" strokeWidth="1.200">
        <path d="M.6.600h14.800v11.500h-5L8 15l-2.500-2.900H.6z" />
      </svg>
      <div className="w-px h-10 mr-1 bg-[#4a5360]" />
    </div>
  );
}

export default function App() {
  return (
    <div className="relative isolate w-[1280px] h-[720px] overflow-hidden text-[12px] tracking-[-0.32px] font-['Noto_Sans','Open_Sans',sans-serif] bg-[linear-gradient(84deg,#00b0ff,#00aefd_30%,#008be8_56%,#0057cb_77%,#003db4)]">
      <div className="absolute inset-x-0 top-0 h-[180px] bg-gradient-to-b from-[#0050b0]/15 to-transparent" />
      <DesktopIcons />
      <DocumentsWindow />
      <QuickAccessWindow />
      <div className="absolute right-[5px] top-[630px] text-right text-white whitespace-nowrap">
        <div className="leading-[16px] tracking-[-0.38px]">Test Mode</div>
        <div className="leading-[17px] tracking-[-0.38px]">Windows 10 Pro</div>
        <div className="leading-[18px] tracking-[-0.6px]">Build 19041.vb_release.191206-1406</div>
      </div>
      <Watermark />
      <Taskbar />
      {/* drag outline, inverts whatever is under it */}
      <div className="absolute left-[7px] top-[31px] w-[786px] h-[593px] border-4 border-white mix-blend-difference" />
    </div>
  );
}
